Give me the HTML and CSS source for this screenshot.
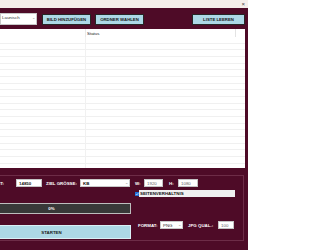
FILE: index.html
```html
<!DOCTYPE html>
<html lang="de">
<head>
<meta charset="utf-8">
<title>Bild Komprimierer</title>
<link rel="stylesheet" href="styles.css">
</head>
<body>
<div class="window">
  <div class="titlebar"><span class="close">×</span></div>
  <div class="toolbar">
    <div class="combo lang"><span class="ctext">Launisch</span><span class="arrow">⌄</span></div>
    <button class="btn b1">BILD HINZUFÜGEN</button>
    <button class="btn b2">ORDNER WÄHLEN</button>
    <button class="btn b3">LISTE LEEREN</button>
  </div>
  <div class="table">
    <div class="thead">
      <div class="c1"></div>
      <div class="c2">Status</div>
      <div class="c3"></div>
    </div>
    <div class="tbody">
      <div class="c1"></div>
      <div class="c2"></div>
    </div>
  </div>
  <div class="bottom">
    <div class="group">
      <div class="left">
        <div class="row r1">
          <span class="lbl limit">LIMIT:</span>
          <span class="input in-limit strong">14850</span>
          <span class="lbl ziel">ZIEL GRÖSSE:</span>
          <div class="combo unit"><span class="ctext">KB</span><span class="arrow">⌄</span></div>
        </div>
        <div class="progress">0%</div>
        <button class="start">STARTEN</button>
      </div>
      <div class="right">
        <div class="row r1">
          <span class="lbl w">W:</span>
          <span class="input in-w">1920</span>
          <span class="lbl h">H:</span>
          <span class="input in-h">1080</span>
        </div>
        <div class="row r2">
          <span class="check"><svg viewBox="0 0 4 4" width="4" height="4"><rect width="4" height="4" fill="#1f6fd6"/><path d="M0.8 2.1 L1.7 3 L3.3 1.1" stroke="#fff" stroke-width="0.6" fill="none"/></svg></span>
          <span class="checklabel">SEITENVERHÄLTNIS</span>
        </div>
        <div class="row r3">
          <span class="lbl fmt">FORMAT:</span>
          <div class="combo format"><span class="ctext">PNG</span><span class="arrow">⌄</span></div>
          <span class="lbl q">JPG QUAL.:</span>
          <span class="input in-q">100</span>
        </div>
      </div>
    </div>
  </div>
</div>
</body>
</html>
```

FILE: styles.css
```css
* { box-sizing: border-box; }
html, body { margin: 0; padding: 0; background: #ffffff; }
body {
  font-family: "Liberation Sans", Arial, sans-serif;
  font-size: 4.4px;
  overflow: hidden;
}
.window {
  width: 248px;
  height: 250px;
  background: #4e0b27;
  display: flex;
  flex-direction: column;
}
.titlebar {
  height: 8px;
  background: #f5eeea;
  display: flex;
  justify-content: flex-end;
  align-items: center;
  padding-right: 3px;
}
.close {
  font-size: 6px;
  line-height: 6px;
  color: #444;
}
.toolbar {
  height: 21px;
  display: flex;
  align-items: flex-start;
  padding-top: 5px;
}
.combo {
  background: #ffffff;
  border: 1px solid #c8c8c8;
  display: flex;
  align-items: center;
  justify-content: space-between;
  color: #222;
  padding: 0 1px 0 1px;
}
.arrow {
  color: #888;
  font-size: 4px;
  line-height: 4px;
}
.lang {
  width: 37px;
  height: 12px;
  padding-bottom: 3px;
}
.lang .ctext { color: #333; }
.btn {
  font-family: inherit;
  font-size: 4.3px;
  font-weight: bold;
  color: #1a1a1a;
  background: #add8e6;
  border: 1px solid #262626;
  height: 11px;
  margin-top: 1px;
  padding: 0;
  display: flex;
  align-items: center;
  justify-content: center;
}
.b1 { width: 49px; margin-left: 5px; }
.b2 { width: 49px; margin-left: 4px; }
.b3 { width: 53px; margin-left: auto; margin-right: 3px; }
.table {
  height: 139px;
  margin-right: 3px;
  background: #ffffff;
  display: flex;
  flex-direction: column;
}
.thead {
  height: 8px;
  display: flex;
  color: #222;
  align-items: center;
}
.thead .c1 { width: 86px; height: 100%; border-right: 1px solid #e9e9e9; }
.thead .c2 { flex: 1; padding-left: 1px; height: 100%; display: flex; align-items: center; border-right: 1px solid #e3e3e3; }
.thead .c3 { width: 9px; }
.tbody {
  flex: 1;
  display: flex;
  background: repeating-linear-gradient(to bottom, transparent 0, transparent 5.67px, #f0f0f0 5.67px, #f0f0f0 6.67px);
}
.tbody .c1 { width: 86px; border-right: 1px solid #f1f1f1; }
.tbody .c2 { flex: 1; }
.bottom {
  flex: 1;
  padding-top: 7px;
}
.group {
  margin-left: -32px;
  width: 276px;
  height: 66px;
  border: 1px solid #6d2c47;
  padding-top: 3px;
  display: flex;
}
.left {
  width: 162px;
  padding-left: 3px;
  display: flex;
  flex-direction: column;
}
.row {
  display: flex;
  align-items: center;
}
.r1 { height: 8px; }
.lbl {
  color: #ffffff;
  font-weight: bold;
  white-space: nowrap;
}
.limit { width: 32px; text-align: right; }
.input {
  background: #ffffff;
  border: 1px solid #c4c4c4;
  height: 8px;
  display: flex;
  align-items: center;
  padding-left: 2px;
  color: #666;
}
.input.strong { color: #111; font-weight: bold; }
.in-limit { width: 26px; margin-left: 12px; }
.ziel { width: 31px; margin-left: 4px; }
.unit { width: 50px; height: 8px; margin-left: 3px; padding-left: 2px; }
.unit .ctext { color: #111; font-weight: bold; }
.progress {
  margin-top: 16px;
  height: 11px;
  background: #383838;
  border: 1px solid #bdbdbd;
  color: #ffffff;
  font-weight: bold;
  display: flex;
  align-items: center;
  justify-content: center;
}
.start {
  margin-top: 11px;
  height: 14px;
  padding: 0;
  font-family: inherit;
  font-size: 4.4px;
  font-weight: bold;
  color: #1a1a1a;
  background: #add8e6;
  border: 1px solid #d9f0f6;
  display: flex;
  align-items: center;
  justify-content: center;
}
.right {
  width: 108px;
  margin-left: 4px;
  display: flex;
  flex-direction: column;
}
.w { width: 9px; }
.in-w { width: 19px; }
.h { width: 9px; margin-left: 6px; }
.in-h { width: 20px; }
.r2 { margin-top: 3px; height: 7px; }
.check { width: 4px; height: 4px; display: flex; }
.checklabel {
  width: 96px;
  height: 7px;
  background: #f0f0f0;
  color: #111;
  font-weight: bold;
  display: flex;
  align-items: center;
  padding-left: 1px;
}
.r3 { margin-top: 24px; height: 8px; }
.fmt { width: 22px; margin-left: 3px; }
.format { width: 23px; height: 8px; padding-left: 2px; }
.format .ctext { color: #333; }
.q { width: 25px; margin-left: 5px; }
.in-q { width: 16px; margin-left: 5px; }
```
